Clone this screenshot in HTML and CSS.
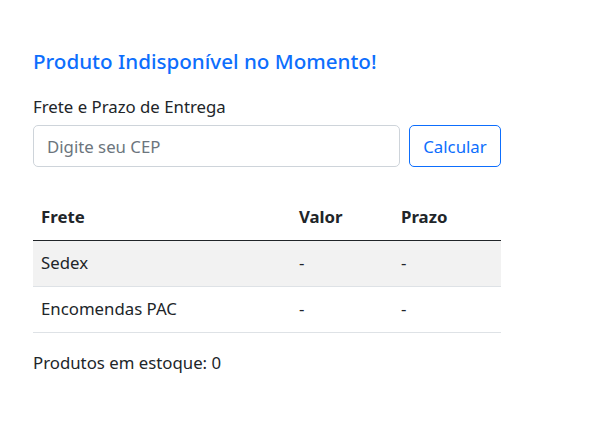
FILE: index.html
```html
<!DOCTYPE html>
<html lang="pt-BR">
<head>
<meta charset="utf-8">
<title>Produto</title>
<link rel="stylesheet" href="styles.css">
</head>
<body>
<div class="wrap">
  <h5 class="title">Produto Indisponível no Momento!</h5>
  <label class="label" for="cep">Frete e Prazo de Entrega</label>
  <div class="cep-row">
    <input id="cep" class="cep-input" type="text" placeholder="Digite seu CEP">
    <button class="btn-calc" type="button">Calcular</button>
  </div>
  <table class="frete">
    <thead>
      <tr><th class="c1">Frete</th><th class="c2">Valor</th><th class="c3">Prazo</th></tr>
    </thead>
    <tbody>
      <tr class="striped"><td>Sedex</td><td>-</td><td>-</td></tr>
      <tr><td>Encomendas PAC</td><td>-</td><td>-</td></tr>
    </tbody>
  </table>
  <p class="stock">Produtos em estoque: 0</p>
</div>
</body>
</html>
```
FILE: styles.css
```css
* { box-sizing: border-box; }
body {
  margin: 0;
  font-family: "Noto Sans", "Open Sans", sans-serif;
  font-size: 16.8px;
  color: #212529;
  background: #fff;
}
.wrap {
  width: 468px;
  margin-left: 33px;
  padding-top: 47px;
}
.title {
  margin: 0 0 20px;
  font-size: 20.6px;
  font-weight: 500;
  line-height: 28px;
  color: #0d6efd;
}
.label {
  display: block;
  line-height: 24px;
  margin-bottom: 6px;
}
.cep-row {
  display: flex;
  gap: 9px;
  margin-bottom: 28px;
}
.cep-input {
  flex: 1;
  height: 42px;
  border: 1px solid #ced4da;
  border-radius: 5px;
  padding: 0 13px;
  font: inherit;
  color: #212529;
}
.cep-input::placeholder { color: #6c757d; }
.btn-calc {
  height: 42px;
  width: 92px;
  border: 1px solid #0d6efd;
  border-radius: 5px;
  background: #fff;
  color: #0d6efd;
  font: inherit;
  padding: 0;
}
.frete {
  width: 100%;
  border-collapse: collapse;
}
.frete th, .frete td {
  text-align: left;
  padding: 0 8px;
  height: 46px;
  line-height: 24px;
}
.frete th { font-weight: 700; height: 45px; border-bottom: 1px solid #212529; }
.frete td { border-bottom: 1px solid #dee2e6; }
.c1 { width: 258px; }
.c2 { width: 102px; }
.striped td { background: #f2f2f2; }
.stock {
  margin: 18px 0 0;
  line-height: 24px;
}
```
